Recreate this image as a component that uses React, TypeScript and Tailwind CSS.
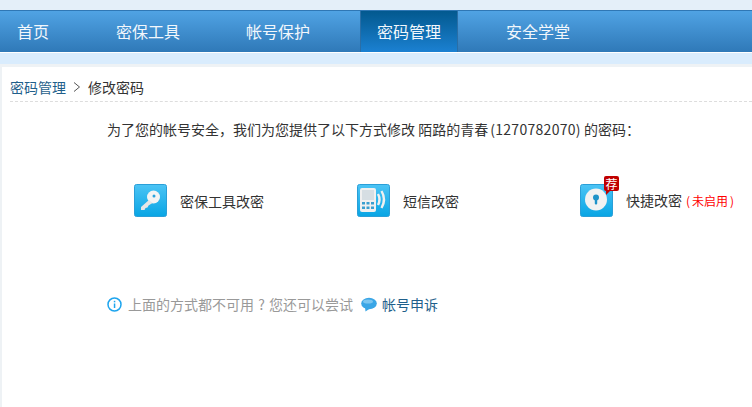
import React from "react";

const font = { fontFamily: '"Noto Sans CJK SC", "Liberation Sans", sans-serif' };

const navItems = [
  { label: "首页", width: "w-[116px]", pad: "pl-[17px]" },
  { label: "密保工具", width: "w-[130px]", pad: "pl-0" },
  { label: "帐号保护", width: "w-[114px]", pad: "pl-0" },
  { label: "密码管理", width: "w-[98px]", pad: "pl-0", active: true },
  { label: "安全学堂", width: "w-[146px]", pad: "pl-[48px]" },
];

const KeyIcon = () => (
  <svg width="33" height="33" viewBox="0 0 33 33">
    <defs>
      <linearGradient id="tile1" x1="0" y1="0" x2="0" y2="1">
        <stop offset="0" stopColor="#4cc4f5" />
        <stop offset="1" stopColor="#08a5e4" />
      </linearGradient>
    </defs>
    <rect x="0.5" y="0.5" width="32" height="32" rx="2" fill="url(#tile1)" stroke="#2a9fd8" />
    <circle cx="19.5" cy="13" r="6.5" fill="#f4f4f4" />
    <circle cx="20" cy="12" r="1.5" fill="#2aa3dc" />
    <path d="M15 16 L7 23 L7 26 L10.5 26 L11.5 24 L13.5 23.5 L14.5 21.5 L18.5 19 Z" fill="#e6e6e6" />
  </svg>
);

const PhoneIcon = () => (
  <svg width="33" height="33" viewBox="0 0 33 33">
    <defs>
      <linearGradient id="tile2" x1="0" y1="0" x2="0" y2="1">
        <stop offset="0" stopColor="#4cc4f5" />
        <stop offset="1" stopColor="#08a5e4" />
      </linearGradient>
    </defs>
    <rect x="0.5" y="0.5" width="32" height="32" rx="2" fill="url(#tile2)" stroke="#2a9fd8" />
    <rect x="3" y="4" width="16" height="24" rx="2" fill="#f0f0f0" />
    <rect x="5" y="6" width="12" height="10" fill="#d6dee3" />
    <path d="M5 18h3v2.5H5zM9.5 18h3v2.5h-3zM14 18h3v2.5h-3zM5 22.5h3V25H5zM9.5 22.5h3V25h-3zM14 22.5h3V25h-3z" fill="#3a9fd0" />
    <path d="M21 10 Q24 15.5 21 21" stroke="#f0f0f0" strokeWidth="2.4" fill="none" />
    <path d="M24.5 7 Q29.5 15.5 24.5 24" stroke="#f0f0f0" strokeWidth="2.4" fill="none" />
  </svg>
);

const LockIcon = () => (
  <svg width="33" height="33" viewBox="0 0 33 33">
    <defs>
      <linearGradient id="tile3" x1="0" y1="0" x2="0" y2="1">
        <stop offset="0" stopColor="#4cc4f5" />
        <stop offset="1" stopColor="#08a5e4" />
      </linearGradient>
    </defs>
    <rect x="0.5" y="0.5" width="32" height="32" rx="2" fill="url(#tile3)" stroke="#2a9fd8" />
    <circle cx="16" cy="15.5" r="11" fill="#f2f2f2" />
    <circle cx="16" cy="13.5" r="3" fill="#1f93c9" />
    <rect x="14.8" y="14" width="2.4" height="6.5" rx="1" fill="#1f93c9" />
  </svg>
);

const Option = ({ icon, label, width }: { icon: React.ReactNode; label: React.ReactNode; width: string }) => (
  <div className={`flex items-center ${width}`}>
    {icon}
    <span className="ml-[13px] text-[14px] leading-[20px] text-[#333] whitespace-nowrap">{label}</span>
  </div>
);

export default function App() {
  return (
    <div className="w-[752px] h-[407px] overflow-hidden bg-[#d9ecfd] flex flex-col" style={font}>
      <div className="h-[11px] shrink-0 bg-[#e4eff9] border-b border-[#2f77b5]" />
      <div className="h-[42px] shrink-0 flex bg-gradient-to-b from-[#50a3e4] to-[#2f79b8] border-b border-white">
        {navItems.map((item) => (
          <div
            key={item.label}
            className={`${item.width} ${item.pad} h-full pb-[2px] flex items-center text-[16px] text-[#f2f7fc] whitespace-nowrap ${
              item.active
                ? "justify-center bg-gradient-to-b from-[#03598f] to-[#1b81d2] border-x border-[#2a6ea6]"
                : ""
            }`}
          >
            {item.label}
          </div>
        ))}
      </div>
      <div className="h-[11px] bg-[#d9ecfd] shrink-0" />
      <div className="flex-1 bg-white border-t-[3px] border-l-[2px] border-[#eef2f5]">
        <div className="ml-[8px] h-[35px] border-b border-dashed border-[#ddd] flex items-center text-[14px] leading-[20px] pt-[5px]">
          <span className="text-[#1f5f8b]">密码管理</span>
          <svg width="10" height="10" viewBox="0 0 10 10" className="mx-[6px]">
            <path d="M2 0.5 L7.5 5 L2 9.5" fill="none" stroke="#555" />
          </svg>
          <span className="text-[#333]">修改密码</span>
        </div>
        <p className="ml-[105px] mt-[17px] text-[14px] leading-[20px] text-[#333] whitespace-nowrap">
          为了您的帐号安全，我们为您提供了以下方式修改 陌路的青春
          <span className="ml-[2px] tracking-[0.3px]">(1270782070)</span> 的密码：
        </p>
        <div className="ml-[132px] mt-[45px] flex">
          <Option icon={<KeyIcon />} label="密保工具改密" width="w-[223px]" />
          <Option icon={<PhoneIcon />} label="短信改密" width="w-[223px]" />
          <div className="relative">
            <Option
              icon={<LockIcon />}
              label={
                <>
                  快捷改密
                  <span className="ml-[4px] text-[12px] text-[#f00]">
                    (<span className="mx-[2px]">未启用</span>)
                  </span>
                </>
              }
              width="w-[170px]"
            />
            <span className="absolute left-[24px] top-[-8px] w-[15px] h-[15px] rounded-[2px] bg-[#c00000] text-white text-[12px] leading-[15px] text-center">
              荐
              <span className="absolute left-[2px] top-[15px] w-0 h-0 border-t-[4px] border-r-[4px] border-t-[#c00000] border-r-transparent" />
            </span>
          </div>
        </div>
        <div className="ml-[105px] mt-[77px] flex items-center text-[14px] leading-[20px] text-[#999] whitespace-nowrap">
          <svg width="15" height="15" viewBox="0 0 15 15">
            <circle cx="7.5" cy="7.5" r="6.5" fill="none" stroke="#1ea5ee" strokeWidth="1.5" />
            <rect x="6.8" y="6.5" width="1.5" height="4.5" fill="#1ea5ee" />
            <rect x="6.8" y="3.8" width="1.5" height="1.5" fill="#1ea5ee" />
          </svg>
          <span className="ml-[6px]">
            上面的方式都不可用<span className="inline-block w-[15px] text-center">?</span>您还可以尝试
          </span>
          <svg width="16" height="15" viewBox="0 0 16 15" className="ml-[8px]">
            <ellipse cx="8" cy="6.5" rx="7.8" ry="5.8" fill="#3aa6e6" />
            <path d="M4 10 L4.5 14.5 L9 11.5 Z" fill="#3aa6e6" />
            <ellipse cx="7" cy="4.5" rx="5" ry="2" fill="#7cc6f0" />
          </svg>
          <span className="ml-[5px] text-[#1f5f8b]">帐号申诉</span>
        </div>
      </div>
    </div>
  );
}
